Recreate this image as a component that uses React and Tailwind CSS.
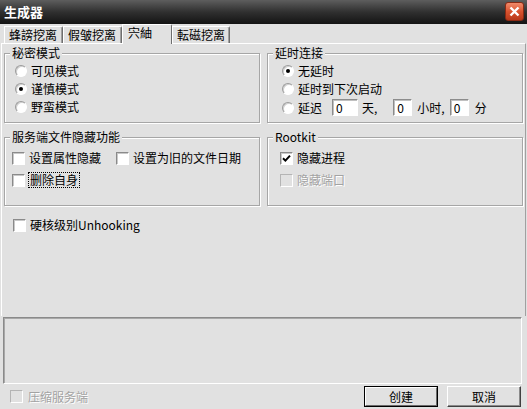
import React from 'react';

// 经典 Win 样式的小控件
const Radio = ({ checked }) => (
  <span className="w-[12px] h-[12px] shrink-0 rounded-full bg-white border border-t-[#9a9a9a] border-l-[#9a9a9a] border-b-white border-r-white shadow-[inset_1px_1px_0_#d0d0d0] flex items-center justify-center">
    {checked && <span className="w-[4px] h-[4px] rounded-full bg-black" />}
  </span>
);

const Check = ({ checked, disabled }) => (
  <span
    className={
      disabled
        ? 'w-[13px] h-[13px] shrink-0 border border-t-[#b4b4b4] border-l-[#b4b4b4] border-b-white border-r-white bg-[#e1e1e1]'
        : 'w-[13px] h-[13px] shrink-0 border border-t-[#8a8a8a] border-l-[#8a8a8a] border-b-white border-r-white bg-white shadow-[inset_1px_1px_0_#c8c8c8] flex items-center justify-center'
    }
  >
    {checked && (
      <svg width="9" height="9" viewBox="0 0 9 9">
        <path d="M1 4.2 L3.4 6.6 L8 1.6" stroke="#000" strokeWidth="2" fill="none" />
      </svg>
    )}
  </span>
);

const Field = ({ value, w }) => (
  <span
    className="h-[17px] bg-white border border-t-[#8c8c8c] border-l-[#8c8c8c] border-b-white border-r-white shadow-[inset_1px_1px_0_#c0c0c0] pl-[3px] leading-[15px] shrink-0"
    style={{ width: w }}
  >
    {value}
  </span>
);

const Group = ({ title, className, children }) => (
  <div className={`border border-[#a6a6a6] shadow-[1px_1px_0_#fff,inset_1px_1px_0_#fff] ${className}`}>
    <div className="-mt-[8px] ml-[5px] px-[2px] w-fit bg-[#e1e1e1] leading-[14px]">{title}</div>
    {children}
  </div>
);

const Tab = ({ label, w, active }) =>
  active ? (
    <div
      className="h-[20px] -mb-[1px] relative z-10 bg-[#e1e1e1] border-t border-l border-white border-r border-r-[#6e6e6e] rounded-tr-[2px] pl-[5px] pt-[1px] leading-[14px]"
      style={{ width: w }}
    >
      {label}
    </div>
  ) : (
    <div
      className="h-[17px] bg-[#e1e1e1] border-t border-l border-white border-r border-r-[#6e6e6e] shadow-[inset_-1px_0_0_#a0a0a0] rounded-tr-[2px] pl-[4px] pt-[1px] leading-[14px]"
      style={{ width: w }}
    >
      {label}
    </div>
  );

const Btn = ({ label, def }) =>
  def ? (
    <div className="w-[74px] h-[21px] border border-black">
      <div className="h-full border border-t-white border-l-white border-b-[#6a6a6a] border-r-[#6a6a6a] flex items-center justify-center leading-[14px]">
        {label}
      </div>
    </div>
  ) : (
    <div className="w-[74px] h-[21px] border border-t-white border-l-white border-b-[#404040] border-r-[#404040] shadow-[inset_-1px_-1px_0_#8a8a8a] flex items-center justify-center leading-[14px]">
      {label}
    </div>
  );

const Disabled = ({ children }) => (
  <span className="text-[#a3a3a3] [text-shadow:1px_1px_0_#fff]">{children}</span>
);

export default function App() {
  return (
    <div className="w-[527px] h-[409px] bg-[#e1e1e1] flex flex-col overflow-hidden text-[12px] text-black font-['Noto_Sans_CJK_SC','Noto_Sans',sans-serif]">
      {/* 标题栏 */}
      <div className="h-[24px] shrink-0 flex items-center justify-between pl-[4px] pr-[3px] bg-gradient-to-b from-[#5e5e5e] via-[#303030] to-[#141414]">
        <span className="text-white font-bold text-[13px] leading-[16px]">生成器</span>
        <div className="w-[19px] h-[19px] -mt-[2px] rounded-[3px] border border-[#8a2a14] bg-gradient-to-b from-[#f08a6a] via-[#d9532f] to-[#b8381a] flex items-center justify-center">
          <svg width="11" height="11" viewBox="0 0 11 11">
            <path d="M1.5 1.5 L9.5 9.5 M9.5 1.5 L1.5 9.5" stroke="#fff" strokeWidth="2.4" />
          </svg>
        </div>
      </div>

      {/* 选项卡 */}
      <div className="h-[19px] shrink-0 flex items-end pl-[4px]">
        <Tab label="蜂謗挖离" w={59} />
        <Tab label="假皱挖离" w={59} />
        <Tab label="宍紬" w={50} active />
        <Tab label="転磁挖离" w={58} />
      </div>

      {/* 选项卡页 */}
      <div className="ml-[1px] w-[525px] h-[273px] shrink-0 border-t border-l border-white border-r border-r-[#a0a0a0] pl-[2px]">
        <div className="flex gap-[7px] mt-[9px]">
          <Group title="秘密模式" className="w-[256px] h-[70px]">
            <div className="flex flex-col mt-[2px] pl-[10px]">
              <div className="h-[18px] flex items-center gap-[4px]"><Radio />可见模式</div>
              <div className="h-[18px] flex items-center gap-[4px]"><Radio checked />谨慎模式</div>
              <div className="h-[18px] flex items-center gap-[4px]"><Radio />野蛮模式</div>
            </div>
          </Group>
          <Group title="延时连接" className="w-[256px] h-[70px]">
            <div className="flex flex-col mt-[2px] pl-[14px]">
              <div className="h-[18px] flex items-center gap-[4px]"><Radio checked />无延时</div>
              <div className="h-[18px] flex items-center gap-[4px]"><Radio />延时到下次启动</div>
              <div className="h-[19px] flex items-center">
                <Radio />
                <span className="ml-[4px]">延迟</span>
                <span className="ml-[10px] flex"><Field value="0" w={26} /></span>
                <span className="ml-[4px]">天,</span>
                <span className="ml-[16px] flex"><Field value="0" w={19} /></span>
                <span className="ml-[5px]">小时,</span>
                <span className="ml-[5px] flex"><Field value="0" w={19} /></span>
                <span className="ml-[6px]">分</span>
              </div>
            </div>
          </Group>
        </div>

        <div className="flex gap-[7px] mt-[14px]">
          <Group title="服务端文件隐藏功能" className="w-[256px] h-[69px]">
            <div className="flex flex-col gap-[4px] mt-[5px] pl-[7px]">
              <div className="h-[18px] flex items-center">
                <Check />
                <span className="ml-[4px]">设置属性隐藏</span>
                <span className="ml-[15px] flex"><Check /></span>
                <span className="ml-[4px]">设置为旧的文件日期</span>
              </div>
              <div className="h-[18px] flex items-center">
                <Check />
                <span className="ml-[3px] border border-dotted border-black px-[1px] leading-[14px]">删除自身</span>
              </div>
            </div>
          </Group>
          <Group title="Rootkit" className="w-[256px] h-[69px]">
            <div className="flex flex-col gap-[4px] mt-[5px] pl-[12px]">
              <div className="h-[18px] flex items-center gap-[4px]"><Check checked />隐藏进程</div>
              <div className="h-[18px] flex items-center gap-[4px]"><Check disabled /><Disabled>隐藏端口</Disabled></div>
            </div>
          </Group>
        </div>

        <div className="h-[18px] mt-[10px] pl-[9px] flex items-center gap-[4px]">
          <Check />硬核级别Unhooking
        </div>
      </div>

      {/* 日志框 */}
      <div className="mt-[1px] ml-[3px] w-[519px] h-[67px] shrink-0 border border-t-[#8a8a8a] border-l-[#8a8a8a] border-b-white border-r-white shadow-[inset_1px_1px_0_#a8a8a8]" />

      {/* 底部 */}
      <div className="h-[25px] shrink-0 flex items-center pl-[10px] pr-[6px]">
        <Check disabled />
        <span className="ml-[5px]"><Disabled>压缩服务端</Disabled></span>
        <div className="ml-auto flex gap-[9px]">
          <Btn label="创建" def />
          <Btn label="取消" />
        </div>
      </div>
    </div>
  );
}
